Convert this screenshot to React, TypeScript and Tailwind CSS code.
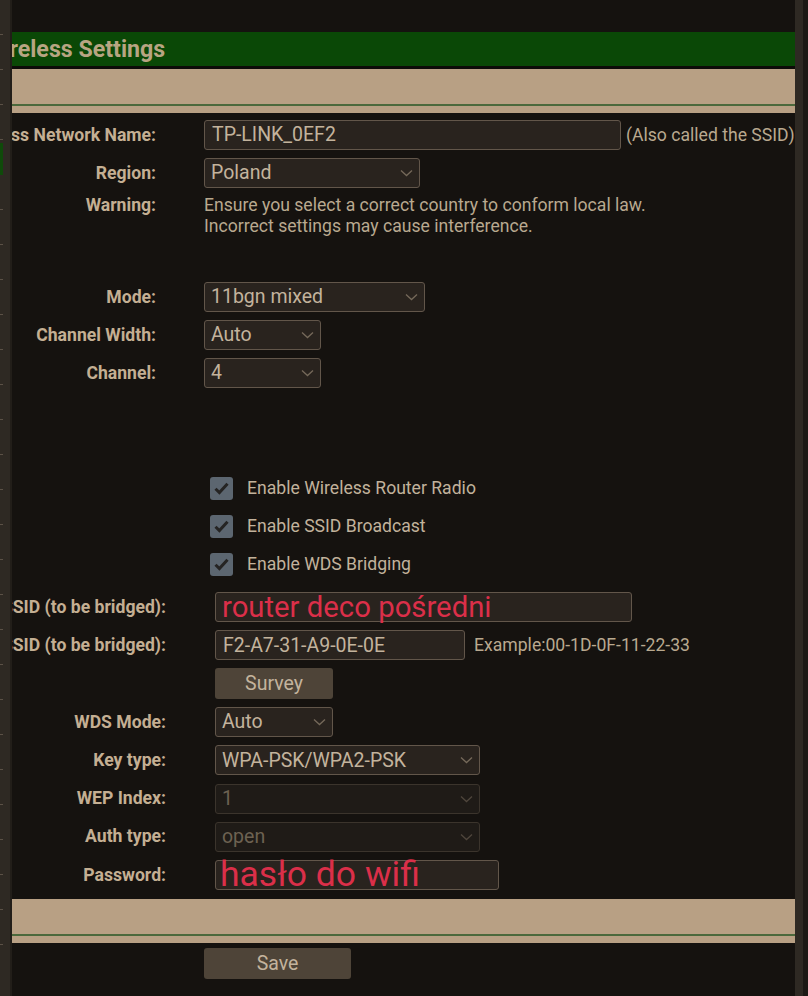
import React from "react";

const FONT = { fontFamily: "Roboto, 'Noto Sans', 'Liberation Sans', sans-serif" };

function Chevron({ dim }: { dim?: boolean }) {
  return (
    <svg width="13" height="8" viewBox="0 0 13 8" fill="none">
      <path
        d="M1 1.5L6.5 6.5L12 1.5"
        stroke={dim ? "#4f463c" : "#75695a"}
        strokeWidth="1.3"
      />
    </svg>
  );
}

function Select({
  value,
  width,
  disabled,
}: {
  value: string;
  width: string;
  disabled?: boolean;
}) {
  return (
    <div
      className={`${width} h-[30px] flex items-center justify-between pl-[6px] pr-[6px] rounded-[3px] border ${
        disabled
          ? "border-[#3b342c] bg-[#1f1b17] text-[#6d6252]"
          : "border-[#62564a] bg-[#29231e] text-[#c3b39d]"
      }`}
    >
      <span className="text-[19.5px] leading-none">{value}</span>
      <Chevron dim={disabled} />
    </div>
  );
}

function TextBox({
  value,
  width,
  red,
  size = "text-[19.5px]",
  pad = "pl-[7px]",
}: {
  value: string;
  width: string;
  red?: boolean;
  size?: string;
  pad?: string;
}) {
  return (
    <div
      className={`${width} ${pad} h-[30px] flex items-center rounded-[3px] border border-[#62564a] bg-[#29231e] overflow-visible whitespace-nowrap`}
    >
      <span
        className={`${size} leading-none ${
          red ? "text-[#db2f49]" : "text-[#c3b39d]"
        }`}
      >
        {value}
      </span>
    </div>
  );
}

function Label({ text, width }: { text: string; width: string }) {
  return (
    <div className={`${width} flex justify-end shrink-0`}>
      <span className="whitespace-nowrap text-[17.6px] leading-[21px] font-bold text-[#c4af93]">
        {text}
      </span>
    </div>
  );
}

function TopRow({ label, children }: { label: string; children: React.ReactNode }) {
  return (
    <div className="flex items-center h-[38px]">
      <Label text={label} width="w-[144px]" />
      <div className="ml-[48px] flex items-center">{children}</div>
    </div>
  );
}

function WdsRow({ label, children }: { label: string; children: React.ReactNode }) {
  return (
    <div className="flex items-center h-[38.3px]">
      <Label text={label} width="w-[154px]" />
      <div className="ml-[49px] flex items-center">{children}</div>
    </div>
  );
}

function Check({ label }: { label: string }) {
  return (
    <div className="flex items-center h-[38px] pl-[198px]">
      <div className="w-[23px] h-[23px] rounded-[3px] bg-[#5c6670] flex items-center justify-center">
        <svg width="15" height="13" viewBox="0 0 15 13" fill="none">
          <path d="M1.5 6.8L5.4 10.6L13.5 1.8" stroke="#252423" strokeWidth="3" />
        </svg>
      </div>
      <span className="ml-[14px] text-[17.6px] text-[#c2b29c]">{label}</span>
    </div>
  );
}

function TanBand() {
  return (
    <div className="flex flex-col">
      <div className="h-[35px] bg-[#b8a084]" />
      <div className="h-[2px] bg-[#4b693c]" />
      <div className="h-[7px] bg-[#b8a084]" />
    </div>
  );
}

export default function App() {
  const ticks = Array.from({ length: 27 });
  return (
    <div
      className="w-[808px] h-[996px] flex bg-[#15120f] overflow-hidden"
      style={FONT}
    >
      {/* left frame strip */}
      <div className="w-[12px] shrink-0 bg-[#2e2923] border-r-[2px] border-[#221e19] flex flex-col">
        {ticks.map((_, i) => (
          <div key={i} className="h-[35px] flex flex-col justify-end">
            {i === 4 ? (
              <div className="h-[32px] w-[3px] bg-[#0f4a0a]" />
            ) : (
              <div className="h-[1px] w-[3px] bg-[#5b5146]" />
            )}
          </div>
        ))}
      </div>

      {/* main content */}
      <div className="flex-1 flex flex-col overflow-hidden">
        <div className="h-[32px]" />
        <div className="h-[34px] bg-[#0a4806] flex items-center whitespace-nowrap">
          <span className="-ml-[29px] text-[23.2px] font-bold text-[#b8a582]">
            Wireless Settings
          </span>
        </div>
        <div className="h-[3px] bg-[#0d0b08]" />
        <TanBand />

        <div className="h-[3px]" />
        <TopRow label="Wireless Network Name:">
          <TextBox value="TP-LINK_0EF2" width="w-[417px]" />
          <span className="ml-[5px] text-[17.6px] text-[#b9a98f] whitespace-nowrap">
            (Also called the SSID)
          </span>
        </TopRow>
        <TopRow label="Region:">
          <Select value="Poland" width="w-[216px]" />
        </TopRow>
        <div className="flex items-start pt-[3px]">
          <Label text="Warning:" width="w-[144px]" />
          <div className="ml-[48px] text-[17.6px] leading-[21px] text-[#b9a98f]">
            <div>Ensure you select a correct country to conform local law.</div>
            <div>Incorrect settings may cause interference.</div>
          </div>
        </div>

        <div className="h-[41px]" />
        <TopRow label="Mode:">
          <Select value="11bgn mixed" width="w-[221px]" />
        </TopRow>
        <TopRow label="Channel Width:">
          <Select value="Auto" width="w-[117px]" />
        </TopRow>
        <TopRow label="Channel:">
          <Select value="4" width="w-[117px]" />
        </TopRow>

        <div className="h-[77px]" />
        <Check label="Enable Wireless Router Radio" />
        <Check label="Enable SSID Broadcast" />
        <Check label="Enable WDS Bridging" />

        <div className="h-[5px]" />
        <WdsRow label="SSID (to be bridged):">
          <TextBox
            value="router deco pośredni"
            width="w-[417px]"
            red
            size="text-[29.3px]"
            pad="pl-[6px]"
          />
        </WdsRow>
        <WdsRow label="BSSID (to be bridged):">
          <TextBox value="F2-A7-31-A9-0E-0E" width="w-[250px]" />
          <span className="ml-[9px] text-[17.6px] text-[#b9a98f] whitespace-nowrap">
            Example:00-1D-0F-11-22-33
          </span>
        </WdsRow>
        <WdsRow label="">
          <div className="w-[118px] h-[31px] rounded-[3px] bg-[#4e4438] flex items-center justify-center text-[19.5px] text-[#c3b39d]">
            Survey
          </div>
        </WdsRow>
        <WdsRow label="WDS Mode:">
          <Select value="Auto" width="w-[118px]" />
        </WdsRow>
        <WdsRow label="Key type:">
          <Select value="WPA-PSK/WPA2-PSK" width="w-[265px]" />
        </WdsRow>
        <WdsRow label="WEP Index:">
          <Select value="1" width="w-[265px]" disabled />
        </WdsRow>
        <WdsRow label="Auth type:">
          <Select value="open" width="w-[265px]" disabled />
        </WdsRow>
        <WdsRow label="Password:">
          <TextBox
            value="hasło do wifi"
            width="w-[284px]"
            red
            size="text-[35.5px]"
            pad="pl-[4px]"
          />
        </WdsRow>

        <div className="h-[5px]" />
        <TanBand />
        <div className="ml-[192px] mt-[5px] w-[147px] h-[31px] rounded-[3px] bg-[#4e4438] flex items-center justify-center text-[19.5px] text-[#c3b39d]">
          Save
        </div>
      </div>

      {/* right frame strip */}
      <div className="w-[8px] shrink-0 bg-[#2e2923]" />
      <div className="w-[5px] shrink-0 bg-[#1c1915]" />
    </div>
  );
}
